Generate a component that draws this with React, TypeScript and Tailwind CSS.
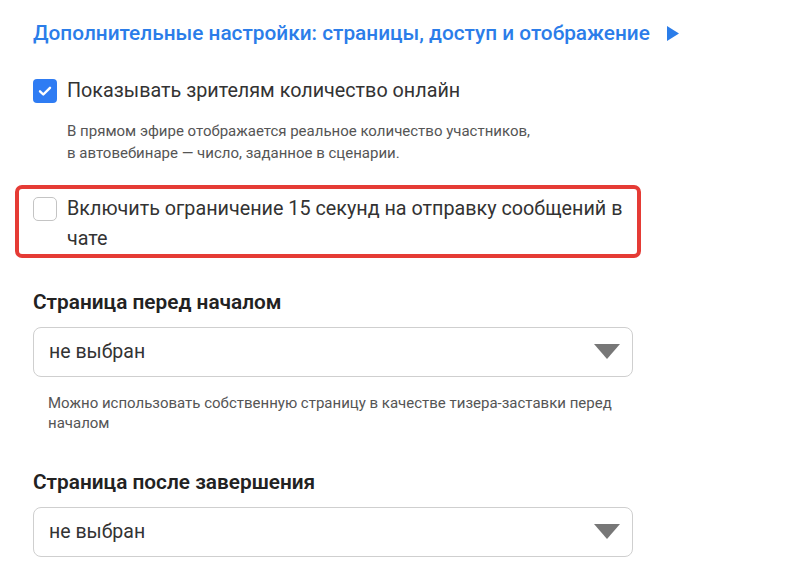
import React from 'react';

const font = { fontFamily: 'Roboto, "Noto Sans", sans-serif' };

const Checkbox = ({ checked }: { checked: boolean }) =>
  checked ? (
    <span className="mt-[3px] flex h-[24px] w-[24px] shrink-0 items-center justify-center rounded-[4px] bg-[#2f7cf3]">
      <svg width="16" height="16" viewBox="0 0 16 16" fill="none">
        <path d="M3 8.3l3.3 3.2L13 4.8" stroke="#fff" strokeWidth="2.4" strokeLinecap="round" strokeLinejoin="round" />
      </svg>
    </span>
  ) : (
    <span className="mt-[3px] h-[24px] w-[24px] shrink-0 rounded-[5px] border border-[#c4c4c4] bg-white" />
  );

const Select = () => (
  <div className="flex h-[50px] w-[600px] items-center justify-between rounded-[8px] border border-[#cfcfcf] bg-white pl-[15px] pr-[12px]">
    <span className="text-[19.5px] text-[#333]">не выбран</span>
    <svg width="26" height="16" viewBox="0 0 26 16">
      <path d="M0 0h26L13 15z" fill="#777" />
    </svg>
  </div>
);

export default function App() {
  return (
    <div className="min-h-screen bg-white pl-[33px] pt-[19px]" style={font}>
      <div className="flex items-center gap-[17px]">
        <h2 className="text-[20.8px] font-medium leading-[28px] text-[#2b7de9]">
          Дополнительные настройки: страницы, доступ и отображение
        </h2>
        <svg width="12" height="15" viewBox="0 0 12 15">
          <path d="M0 0l12 7.5L0 15z" fill="#2b7de9" />
        </svg>
      </div>

      <div className="mt-[29px] flex items-start gap-[10px]">
        <Checkbox checked />
        <span className="text-[19.75px] leading-[30px] text-[#333]">Показывать зрителям количество онлайн</span>
      </div>
      <p className="mt-[14px] pl-[34px] text-[15px] leading-[22px] text-[#555]">
        В прямом эфире отображается реальное количество участников,
        <br />в автовебинаре — число, заданное в сценарии.
      </p>

      <div className="-ml-[18px] mt-[21px] flex w-[626px] items-start gap-[10px] rounded-[7px] border-[4px] border-[#e53b35] pl-[14px] pt-[5px]">
        <Checkbox checked={false} />
        <span className="w-[566px] text-[19.75px] leading-[30px] text-[#333]">
          Включить ограничение 15 секунд на отправку сообщений в чате
        </span>
      </div>

      <h3 className="mt-[32px] text-[20.8px] font-semibold leading-[24px] text-[#222]">Страница перед началом</h3>
      <div className="mt-[13px]">
        <Select />
      </div>
      <p className="mt-[16px] w-[600px] pl-[15px] text-[15px] leading-[20px] text-[#555]">
        Можно использовать собственную страницу в качестве тизера-заставки перед началом
      </p>

      <h3 className="mt-[37px] text-[20.8px] font-semibold leading-[24px] text-[#222]">Страница после завершения</h3>
      <div className="mt-[13px]">
        <Select />
      </div>
    </div>
  );
}
